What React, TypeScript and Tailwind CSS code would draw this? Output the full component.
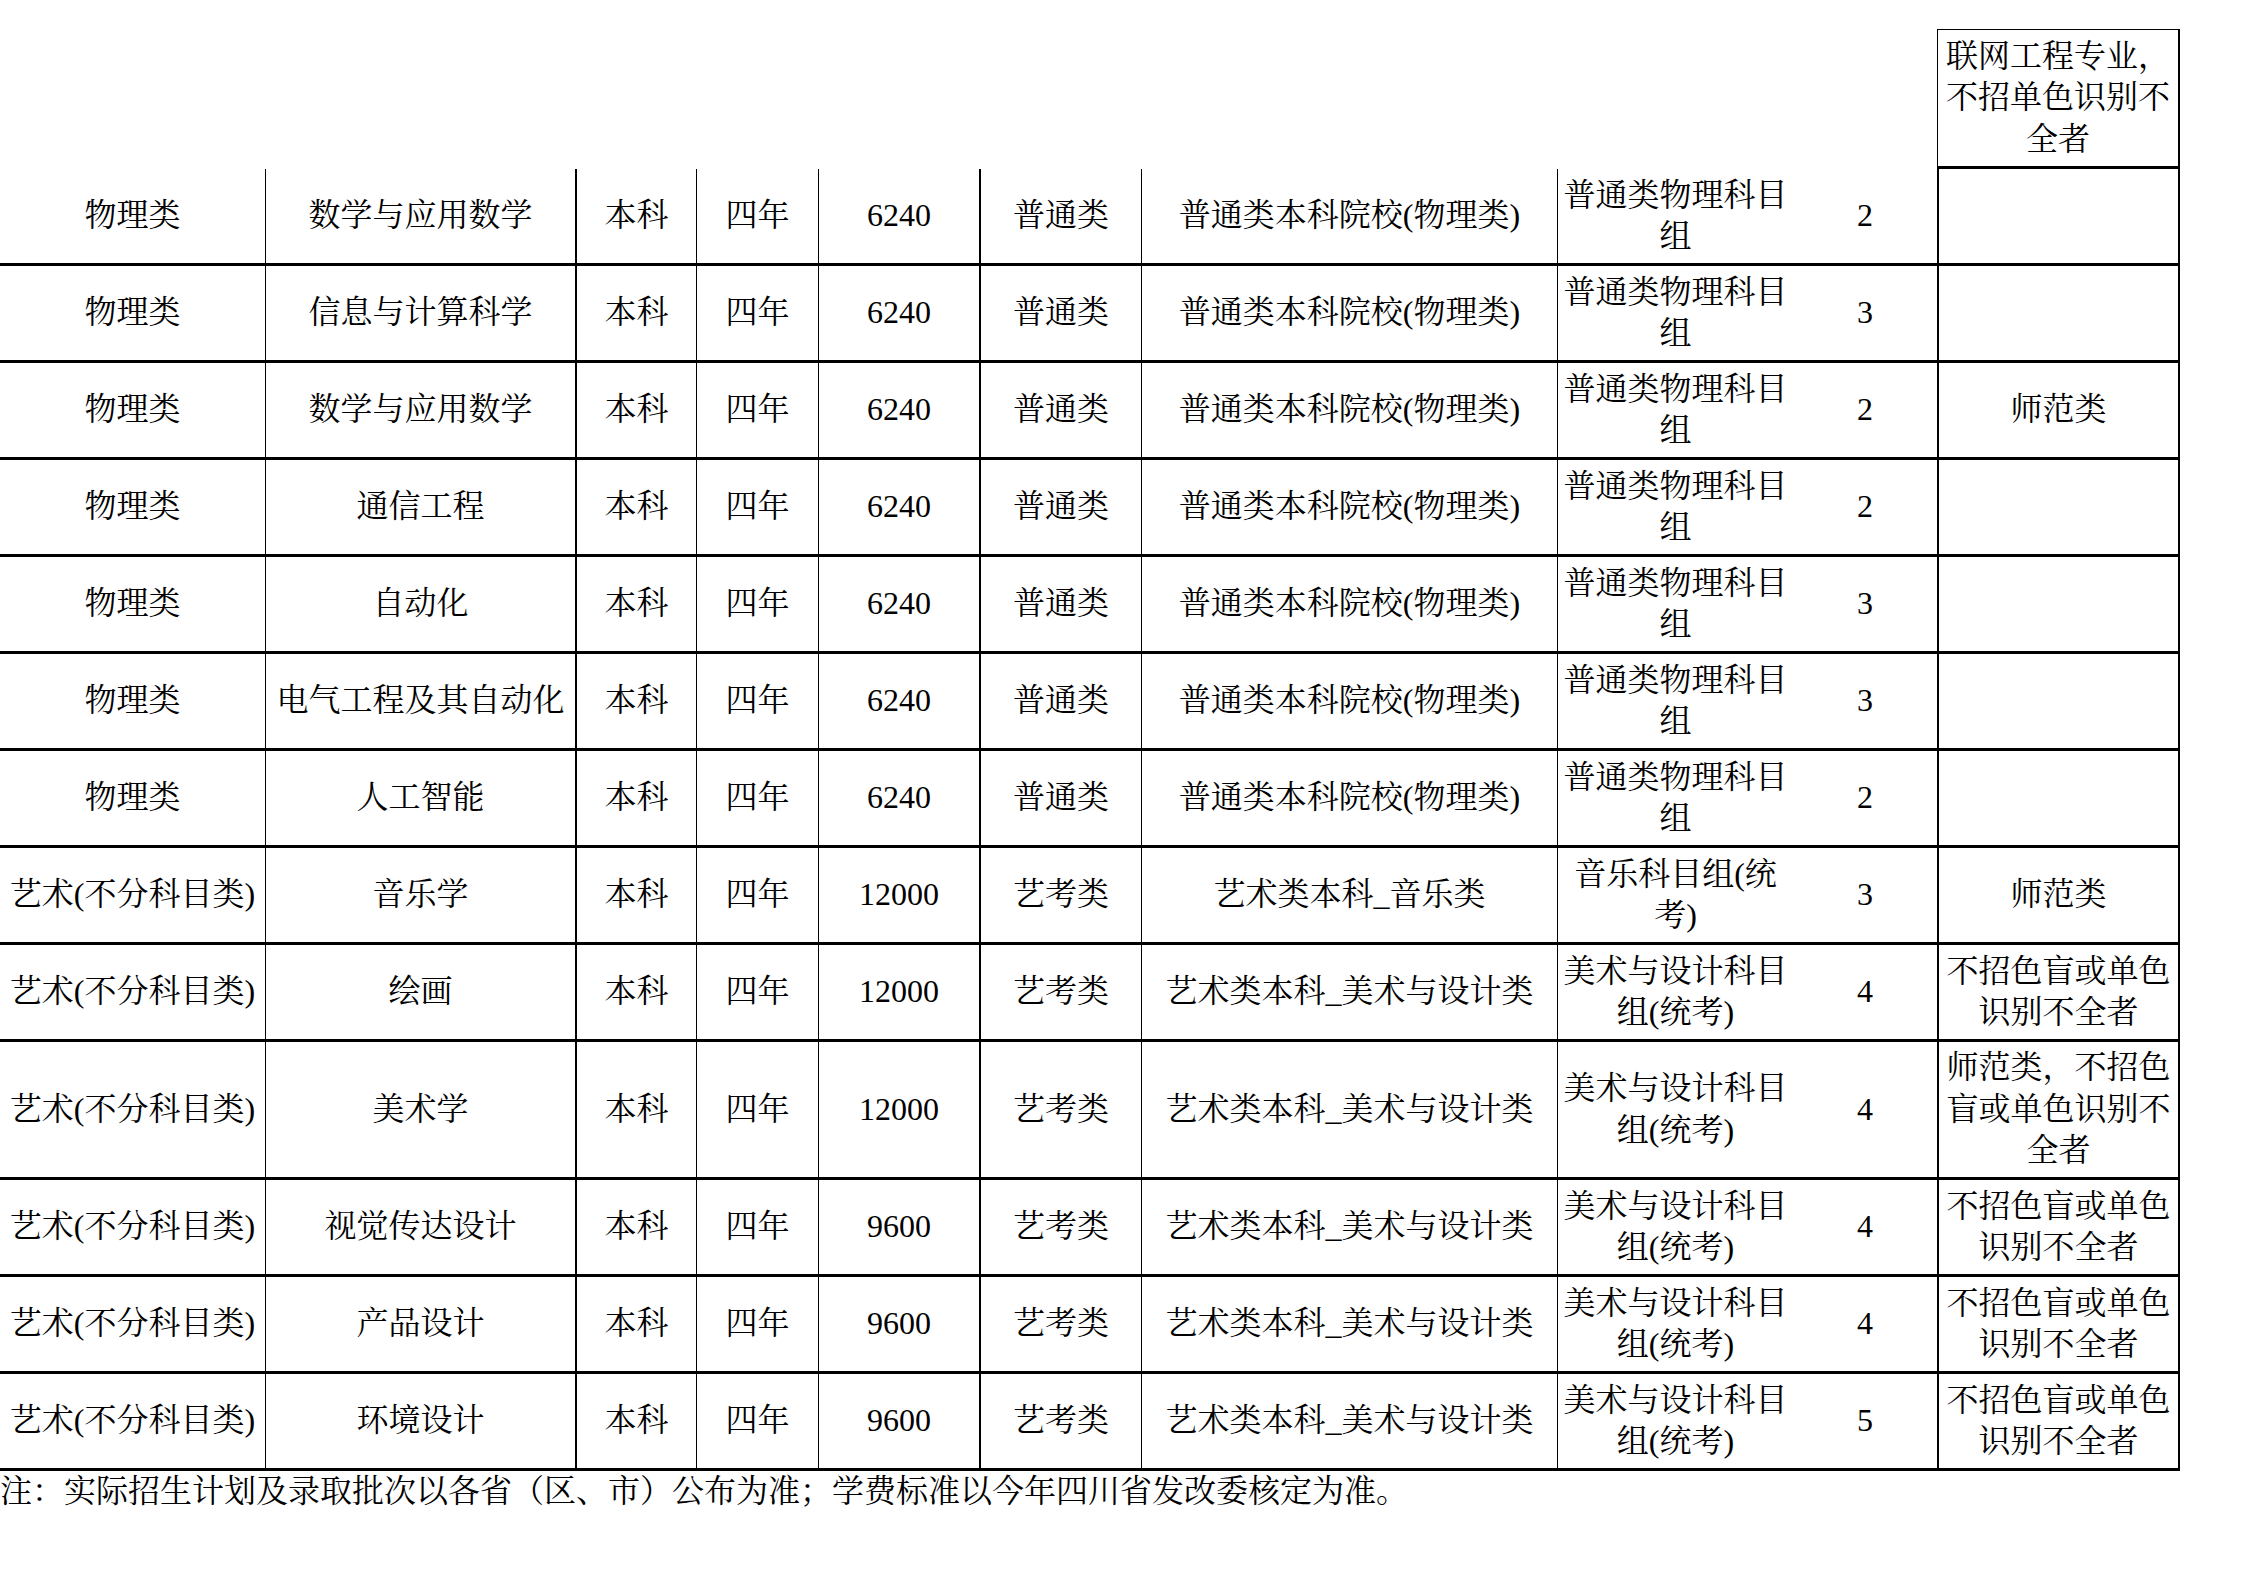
const cols =
  "grid w-[2180px] grid-cols-[266px_311px_120px_122px_162px_161px_416px_235px_146px_241px]"

type Row = {
  cat: string
  major: string
  money: string
  type: string
  batch: string
  group: string
  plan: string
  note: string
  tall?: boolean
}

const phys = (major: string, plan: string, note = ""): Row => ({
  cat: "物理类",
  major,
  money: "6240",
  type: "普通类",
  batch: "普通类本科院校(物理类)",
  group: "普通类物理科目组",
  plan,
  note,
})

const art = (major: string, money: string, plan: string, note: string, tall = false): Row => ({
  cat: "艺术(不分科目类)",
  major,
  money,
  type: "艺考类",
  batch: "艺术类本科_美术与设计类",
  group: "美术与设计科目组(统考)",
  plan,
  note,
  tall,
})

const noColour = "不招色盲或单色识别不全者"

const rows: Row[] = [
  phys("数学与应用数学", "2"),
  phys("信息与计算科学", "3"),
  phys("数学与应用数学", "2", "师范类"),
  phys("通信工程", "2"),
  phys("自动化", "3"),
  phys("电气工程及其自动化", "3"),
  phys("人工智能", "2"),
  {
    cat: "艺术(不分科目类)",
    major: "音乐学",
    money: "12000",
    type: "艺考类",
    batch: "艺术类本科_音乐类",
    group: "音乐科目组(统考)",
    plan: "3",
    note: "师范类",
  },
  art("绘画", "12000", "4", noColour),
  art("美术学", "12000", "4", "师范类，不招色盲或单色识别不全者", true),
  art("视觉传达设计", "9600", "4", noColour),
  art("产品设计", "9600", "4", noColour),
  art("环境设计", "9600", "5", noColour),
]

function Cell({ children, className = "" }: { children?: React.ReactNode; className?: string }) {
  return (
    <div className={`flex items-center justify-center text-center border-black ${className}`}>
      {children}
    </div>
  )
}

export default function App() {
  return (
    <div
      className="w-[2245px] h-[1587px] bg-white text-black text-[32px] leading-[41.5px]"
      style={{ fontFamily: '"Liberation Serif", "Noto Serif CJK SC", "Noto Sans CJK SC", serif' }}
    >
      {/* header: only the last column has a cell */}
      <div className={`${cols} pt-[29px]`}>
        <div className="col-start-10 -ml-[2px] h-[140px] border-t border-l border-r-2 border-b-[3px] border-black flex items-center justify-center text-center px-[6px]">
          联网工程专业，不招单色识别不全者
        </div>
      </div>

      {/* body rows */}
      {rows.map((r, i) => (
        <div
          key={i}
          className={`${cols} border-b-[3px] border-black ${r.tall ? "h-[138px]" : "h-[97px]"}`}
        >
          <Cell className="border-r">{r.cat}</Cell>
          <Cell className="border-r-2">{r.major}</Cell>
          <Cell className="border-r">本科</Cell>
          <Cell className="border-r">四年</Cell>
          <Cell className="border-r-2">{r.money}</Cell>
          <Cell className="border-r">{r.type}</Cell>
          <Cell className="border-r">{r.batch}</Cell>
          <Cell className="px-[4px]">{r.group}</Cell>
          <Cell className="border-r-2">{r.plan}</Cell>
          <Cell className="border-r-2 px-[6px]">{r.note}</Cell>
        </div>
      ))}

      {/* footnote */}
      <p className="whitespace-nowrap">
        注：实际招生计划及录取批次以各省（区、市）公布为准；学费标准以今年四川省发改委核定为准。
      </p>
    </div>
  )
}
